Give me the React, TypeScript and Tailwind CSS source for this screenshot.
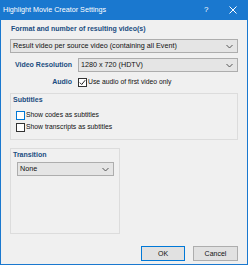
import { FC, ReactNode } from "react";

const font = { fontFamily: "'Liberation Sans', Arial, sans-serif" };

const Chevron = () => (
  <svg width="7" height="5" viewBox="0 0 7 5" className="shrink-0">
    <path d="M0.5 1 L3.5 4 L6.5 1" fill="none" stroke="#555" strokeWidth="1" />
  </svg>
);

const Combo: FC<{ value: string; className?: string }> = ({ value, className }) => (
  <div
    className={
      "h-[14px] bg-[#e5e5e5] border border-[#adadad] flex items-center justify-between pl-[2px] pr-[4px] text-[7.2px] leading-none text-[#111] " +
      (className ?? "")
    }
  >
    <span>{value}</span>
    <Chevron />
  </div>
);

const Check: FC<{ checked?: boolean; focus?: boolean; children: ReactNode }> = ({ checked, focus, children }) => (
  <div className="h-[9px] flex items-center gap-[1px] text-[6.8px] leading-none text-[#111]">
    <div
      className={
        "w-[9px] h-[9px] bg-white border flex items-center justify-center " +
        (focus ? "border-[#0078d7]" : "border-[#333]")
      }
    >
      {checked && (
        <svg width="7" height="7" viewBox="0 0 7 7">
          <path d="M0.8 3.6 L2.7 5.5 L6.2 1.2" fill="none" stroke="#222" strokeWidth="1" />
        </svg>
      )}
    </div>
    <span>{children}</span>
  </div>
);

const Label: FC<{ children: ReactNode; className?: string }> = ({ children, className }) => (
  <div className={"h-[10px] leading-[10px] text-[7px] font-bold text-[#1a4d80] " + (className ?? "")}>{children}</div>
);

export default function App() {
  return (
    <div style={font} className="w-[248px] h-[265px] flex flex-col bg-[#1a78cf] select-none">
      <div className="h-[20px] shrink-0 flex items-center text-white text-[7.2px] pl-[3px]">
        <span className="flex-1">Highlight Movie Creator Settings</span>
        <span className="w-[10px] text-[8px]">?</span>
        <span className="w-[26px] flex justify-center pl-[12px]">
          <svg width="8" height="8" viewBox="0 0 8 8">
            <path d="M0.5 0.5 L7.5 7.5 M7.5 0.5 L0.5 7.5" stroke="white" strokeWidth="1" />
          </svg>
        </span>
        <span className="w-[8px]" />
      </div>
      <div className="flex-1 mx-[1px] mb-[1px] bg-[#f0f0f0] px-[9px] flex flex-col">
        <Label className="mt-[4px] ml-[1px]">Format and number of resulting video(s)</Label>
        <Combo value="Result video per source video (containing all Event)" className="mt-[5px]" />

        <div className="mt-[5px] h-[14px] flex items-center">
          <Label className="w-[62px] text-right">Video Resolution</Label>
          <Combo value="1280 x 720 (HDTV)" className="flex-1 ml-[6px]" />
        </div>

        <div className="mt-[5px] h-[10px] flex items-center">
          <Label className="w-[62px] text-right">Audio</Label>
          <div className="ml-[6px]">
            <Check checked>Use audio of first video only</Check>
          </div>
        </div>

        <div className="mt-[6px] border border-[#dcdcdc] pt-[1px] pb-[7px] px-[2px]">
          <Label>Subtitles</Label>
          <div className="mt-[6px] ml-[3px] flex flex-col gap-[3px]">
            <Check focus>Show codes as subtitles</Check>
            <Check>Show transcripts as subtitles</Check>
          </div>
        </div>

        <div className="mt-[8px] w-[110px] h-[86px] border border-[#dcdcdc] pt-[1px] px-[2px]">
          <Label>Transition</Label>
          <Combo value="None" className="mt-[2px] ml-[4px] w-[97px] h-[13px]" />
        </div>

        <div className="mt-auto mb-[3px] flex justify-end gap-[8px] text-[7px] text-[#111]">
          <button className="w-[44px] h-[15px] bg-[#e1e1e1] border border-[#0078d7] leading-none">OK</button>
          <button className="w-[45px] h-[15px] bg-[#e1e1e1] border border-[#adadad] leading-none">Cancel</button>
        </div>
      </div>
    </div>
  );
}
